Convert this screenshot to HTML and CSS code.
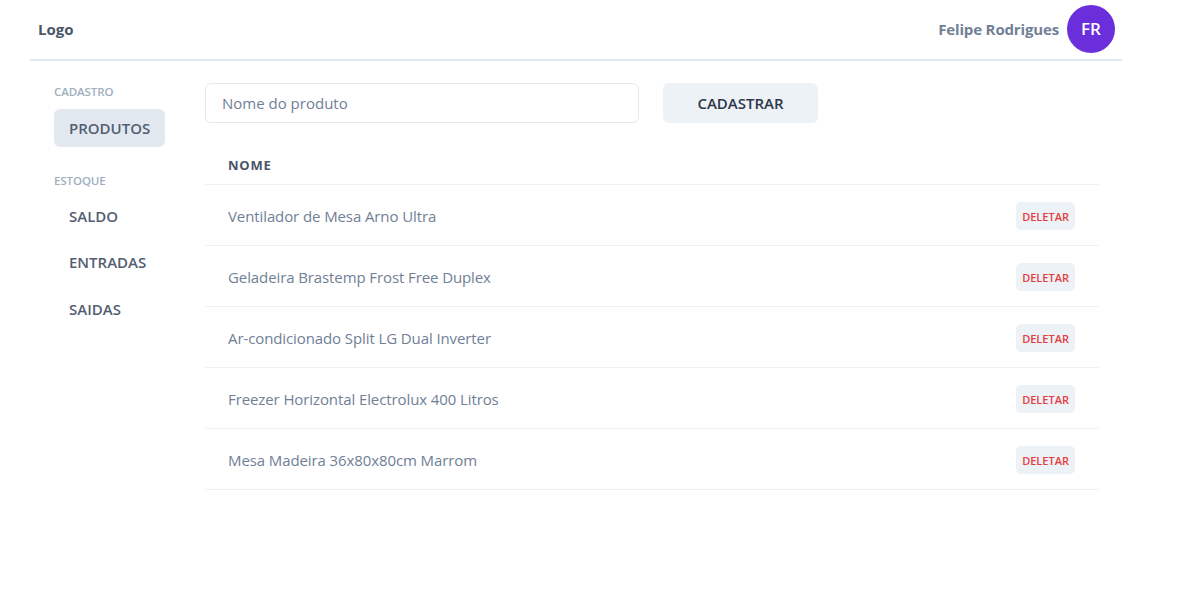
FILE: index.html
```html
<!DOCTYPE html>
<html lang="pt-BR">
<head>
<meta charset="utf-8">
<title>Produtos</title>
<link rel="stylesheet" href="styles.css">
</head>
<body>
<div class="app">
  <header class="header">
    <div class="logo">Logo</div>
    <div class="user">
      <span class="user-name">Felipe Rodrigues</span>
      <span class="avatar">FR</span>
    </div>
  </header>
  <div class="body">
    <nav class="sidebar">
      <div class="nav-label">CADASTRO</div>
      <a class="nav-item active">PRODUTOS</a>
      <div class="nav-label second">ESTOQUE</div>
      <a class="nav-item">SALDO</a>
      <a class="nav-item">ENTRADAS</a>
      <a class="nav-item">SAIDAS</a>
    </nav>
    <main class="main">
      <div class="form">
        <input class="input" type="text" placeholder="Nome do produto">
        <button class="btn-primary">CADASTRAR</button>
      </div>
      <table class="table">
        <thead>
          <tr><th>NOME</th><th></th></tr>
        </thead>
        <tbody>
          <tr><td>Ventilador de Mesa Arno Ultra</td><td class="actions"><button class="btn-del">DELETAR</button></td></tr>
          <tr><td>Geladeira Brastemp Frost Free Duplex</td><td class="actions"><button class="btn-del">DELETAR</button></td></tr>
          <tr><td>Ar-condicionado Split LG Dual Inverter</td><td class="actions"><button class="btn-del">DELETAR</button></td></tr>
          <tr><td>Freezer Horizontal Electrolux 400 Litros</td><td class="actions"><button class="btn-del">DELETAR</button></td></tr>
          <tr><td>Mesa Madeira 36x80x80cm Marrom</td><td class="actions"><button class="btn-del">DELETAR</button></td></tr>
        </tbody>
      </table>
    </main>
  </div>
</div>
</body>
</html>
```

FILE: styles.css
```css
* { box-sizing: border-box; }
html, body { margin: 0; padding: 0; background: #ffffff; }
body {
  font-family: "Open Sans", "Noto Sans", "Liberation Sans", sans-serif;
  color: #4A5568;
}
.app {
  width: 1092px;
  margin-left: 30px;
}
.header {
  height: 61px;
  display: flex;
  align-items: center;
  justify-content: space-between;
  padding: 0 7px 2px 8px;
  border-bottom: 2px solid #E2E8F0;
}
.logo {
  font-size: 15px;
  font-weight: 700;
  color: #4A5568;
}
.user {
  display: flex;
  align-items: center;
  gap: 8px;
}
.user-name {
  font-size: 15px;
  font-weight: 700;
  color: #718096;
  letter-spacing: -0.15px;
}
.avatar {
  width: 48px;
  height: 48px;
  border-radius: 50%;
  background: #6B2EDB;
  color: #ffffff;
  display: flex;
  align-items: center;
  justify-content: center;
  font-size: 17px;
  font-weight: 600;
}
.body {
  display: flex;
  padding: 22px 23px 0 24px;
}
.sidebar {
  width: 151px;
  flex-shrink: 0;
  display: flex;
  flex-direction: column;
  align-items: flex-start;
}
.nav-label {
  font-size: 11.5px;
  font-weight: 600;
  color: #A0AEC0;
  height: 17px;
  line-height: 17px;
  margin-top: 0;
  margin-bottom: 9px;
  letter-spacing: -0.1px;
}
.nav-label.second {
  margin-top: 16px;
  margin-bottom: 8px;
}
.nav-item {
  display: flex;
  align-items: center;
  height: 38px;
  padding: 0 15px;
  border-radius: 6px;
  font-size: 15px;
  font-weight: 600;
  color: #535E72;
  margin-bottom: 8.5px;
  cursor: pointer;
}
.nav-item.active {
  background: #E2E8F0;
  color: #535E72;
}
.main {
  flex: 1;
  display: flex;
  flex-direction: column;
}
.form {
  display: flex;
  gap: 24px;
}
.input {
  width: 434px;
  height: 40px;
  border: 1px solid #E2E8F0;
  border-radius: 6px;
  padding: 0 16px;
  font-family: inherit;
  font-size: 15px;
  color: #2D3748;
  outline: none;
}
.input::placeholder { color: #718096; }
.btn-primary {
  width: 155px;
  height: 40px;
  border: none;
  border-radius: 6px;
  background: #EDF2F7;
  font-family: inherit;
  font-size: 15px;
  font-weight: 600;
  color: #2D3748;
}
.table {
  margin-top: 24px;
  width: 100%;
  border-collapse: collapse;
}
.table th {
  text-align: left;
  font-size: 13px;
  font-weight: 700;
  letter-spacing: 0.8px;
  color: #4A5568;
  padding: 9px 23px 10px;
  height: 37px;
  border-bottom: 1px solid #EDF2F7;
}
.table td {
  font-size: 15px;
  color: #718096;
  padding: 17px 23px 15px;
  height: 61px;
  border-bottom: 1px solid #EDF2F7;
  letter-spacing: -0.1px;
}
.table td.actions {
  text-align: right;
  padding-right: 24px;
}
.btn-del {
  height: 28px;
  padding: 0 6px;
  border: none;
  border-radius: 5px;
  background: #EDF2F7;
  font-family: inherit;
  font-size: 11px;
  font-weight: 600;
  color: #E53E3E;
  vertical-align: middle;
}
```
